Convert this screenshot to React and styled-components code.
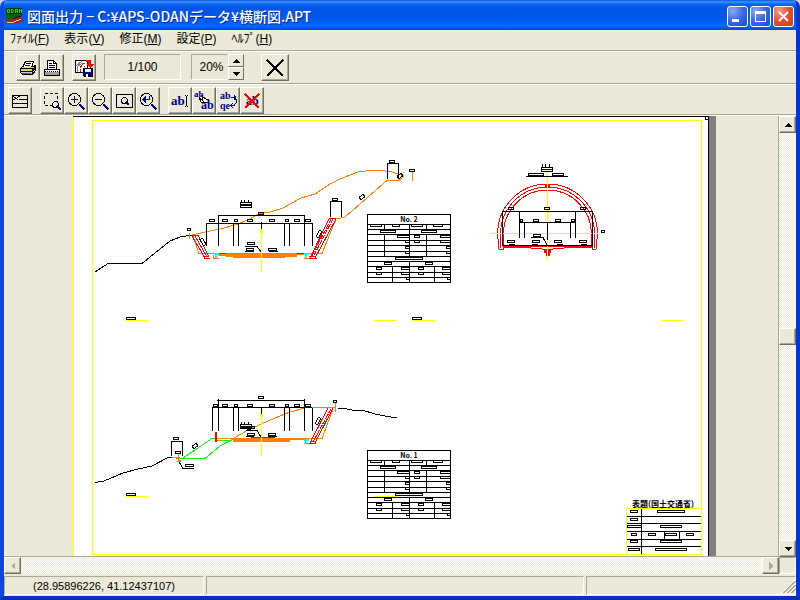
import React, {useState} from 'react';
import styled, {createGlobalStyle} from 'styled-components';

const GlobalStyle = createGlobalStyle`
  * {
    box-sizing: border-box;
  }
  body {
    margin: 0;
    background: #c8d4f0;
  }
  button, input {
    font-family: inherit;
    font-size: inherit;
    color: inherit;
    padding: 0;
    margin: 0;
    border-radius: 0;
  }
`;

const Window = styled.div`
  display: flex;
  flex-direction: column;
  height: 100vh;
  min-height: 400px;
  background-color: #ece9d8;
  border: 4px solid #0a48e0;
  border-top: 0;
  border-right-color: #0836c8;
  border-bottom-color: #0530c0;
  border-radius: 7px 7px 0 0;
  font-family: "Liberation Sans", "Noto Sans CJK JP", sans-serif;
  font-size: 12px;
  color: #000;
  overflow: hidden;
`;

const TitleBar = styled.header`
  display: flex;
  align-items: center;
  flex: none;
  height: 30px;
  margin: 0 -4px;
  padding: 2px 6px 0;
  gap: 5px;
  background: linear-gradient(180deg, #0a4fd8 0%, #3d95ff 6%, #0a62f0 14%, #0055e5 30%, #0058ec 60%, #0566fb 88%, #0048cc 100%);
`;

const Title = styled.h1`
  flex: 1;
  margin: 0;
  font-family: "Noto Sans CJK JP", sans-serif;
  font-size: 14px;
  line-height: 20px;
  font-weight: 500;
  white-space: nowrap;
  color: #fff;
  text-shadow: 1px 1px 0 #0a2a88;
`;

const WindowButtons = styled.div`
  display: flex;
  gap: 2px;
`;

const WindowButton = styled.button`
  width: 21px;
  height: 21px;
  border: 1px solid #fff;
  border-radius: 3px;
  background: ${props => props.$close
    ? 'radial-gradient(circle at 25% 20%, #f0a088, #e0502c 50%, #c83c14)'
    : 'radial-gradient(circle at 25% 20%, #88a8f4, #3a68e4 50%, #1c48cc)'};
  svg {
    display: block;
  }
`;

const MenuBar = styled.nav`
  display: flex;
  flex: none;
  height: 22px;
  padding: 0 6px;
  gap: 15px;
  border-bottom: 1px solid #fff;
  box-shadow: inset 0 -1px 0 #aca899;
`;

const MenuItem = styled.button`
  border: 0;
  background: none;
  line-height: 18px;
  height: 18px;
  white-space: nowrap;
`;

const Toolbar = styled.div`
  display: flex;
  flex: none;
  height: ${props => props.$tall ? 33 : 31}px;
  padding: 2px ${props => props.$tall ? 12 : 4}px;
  gap: 8px;
  border-bottom: 1px solid #fff;
  box-shadow: inset 0 -1px 0 #aca899;
`;

const ToolGroup = styled.div`
  display: flex;
`;

const ToolButton = styled.button`
  display: flex;
  align-items: center;
  justify-content: center;
  width: ${props => props.$wide ? 28 : 24}px;
  height: 27px;
  background-color: #ece9d8;
  border: 1px solid;
  border-color: #fff #716f64 #716f64 #fff;
  box-shadow: inset -1px -1px 0 #aca899;
`;

const Scale = styled.output`
  width: 77px;
  height: 26px;
  line-height: 24px;
  text-align: center;
  border: 1px solid;
  border-color: #aca899 #fff #fff #aca899;
`;

const ZoomBox = styled.div`
  display: flex;
  height: 27px;
  margin: 0 9px 0 2px;
`;

const ZoomInput = styled.input`
  width: 37px;
  height: 26px;
  padding-left: 4px;
  text-align: center;
  background: none;
  border: 1px solid;
  border-color: #aca899 transparent #fff #aca899;
  outline: 0;
`;

const Spinner = styled.div`
  display: flex;
  flex-direction: column;
`;

const SpinButton = styled.button`
  display: flex;
  align-items: center;
  justify-content: center;
  width: 16px;
  height: 13px;
  background-color: #ece9d8;
  border: 1px solid;
  border-color: #fff #716f64 #716f64 #fff;
`;

const Workspace = styled.main`
  display: grid;
  grid-template-columns: 1fr 17px;
  grid-template-rows: 1fr 17px;
  flex: 1;
  min-height: 0;
`;

const Viewer = styled.div`
  display: flex;
  justify-content: center;
  min-width: 0;
  min-height: 0;
  padding-left: 7px;
  overflow: hidden;
  border: 1px solid #aca899;
  border-width: 0 1px 1px 0;
`;

const Sheet = styled.svg`
  flex: none;
  width: 643px;
  height: 441px;
  shape-rendering: crispEdges;
`;

const track = `
  background: repeating-conic-gradient(#fff 0% 25%, #ece9d8 0% 50%) 0 0 / 2px 2px;
`;

const VerticalBar = styled.div`
  ${track}
  display: flex;
  flex-direction: column;
  justify-content: space-between;
`;

const HorizontalBar = styled.div`
  ${track}
  display: flex;
  justify-content: space-between;
`;

const ScrollButton = styled.button`
  display: flex;
  align-items: center;
  justify-content: center;
  width: 17px;
  height: 17px;
  background-color: #ece9d8;
  border: 1px solid;
  border-color: #fff #716f64 #716f64 #fff;
  box-shadow: inset -1px -1px 0 #aca899;
`;

const Corner = styled.div`
  border: 1px solid;
  border-color: #aca899 #fff #fff #aca899;
`;

const StatusBar = styled.footer`
  display: grid;
  grid-template-columns: 200px 1fr 210px;
  gap: 2px;
  flex: none;
  height: 22px;
  padding-top: 2px;
`;

const StatusCell = styled.div`
  display: flex;
  align-items: center;
  justify-content: ${props => props.$grip ? 'flex-end' : 'center'};
  height: 19px;
  font-size: 11px;
  white-space: nowrap;
  border: 1px solid;
  border-color: #aca899 #fff #fff #aca899;
`;

const Icon = styled.svg`
  display: block;
  flex: none;
  overflow: visible;
  shape-rendering: crispEdges;
`;

const IconText = styled.text`
  font-family: "Liberation Serif", serif;
  font-weight: bold;
  font-size: ${props => props.$size || 12}px;
  fill: #000080;
`;

const DrawingText = styled.text`
  font-family: "Noto Sans CJK JP", sans-serif;
  font-weight: bold;
  font-size: ${props => props.$size}px;
`;

const arrows = {
    up: 'M4 0L8 4H0Z',
    down: 'M0 0H8L4 4Z',
    left: 'M4 0V8L0 4Z',
    right: 'M0 0L4 4L0 8Z'
};

const Arrow = ({dir, color = '#000'}) => (
    <Icon width={dir === 'left' || dir === 'right' ? 4 : 8} height={dir === 'left' || dir === 'right' ? 8 : 4}>
        <path d={arrows[dir]} fill={color}/>
    </Icon>
);

const AppIcon = () => (
    <Icon width="16" height="16">
        <path d="M0 0H16V6H0Z" fill="#003800"/>
        <path d="M1.5 1V5M3.5 1V5M1 1.5H4M1 4.5H4M5.5 1V5M7.5 2V4M5 1.5H7M5 4.5H7M9.5 1V5M11.5 1V5M9 1.5H12M9 3.5H12M13.5 1V5M15.5 1V5M14 2.5H15" stroke="#18c828"/>
        <path d="M0 6H16V7L10 9L4 12H0Z" fill="#086010"/>
        <path d="M4 12L10 9L16 7V10L8 12Z" fill="#101010"/>
        <path d="M0 12L8 11L16 8V14L8 16H0Z" fill="#a02818"/>
        <path d="M1 14H8L15 11" stroke="#e0c8b0" fill="none"/>
    </Icon>
);

const PrinterIcon = () => (
    <Icon width="20" height="20">
        <path d="M7.5 3.5H15.5L13.5 9.5H4.5Z" fill="#fff" stroke="#000"/>
        <path d="M8 5.5H13M7 7.5H12" stroke="#000"/>
        <path d="M2.5 10.5L4.5 8.5H15.5L17.5 7.5V12.5L14.5 16.5H4.5L2.5 14.5Z" fill="#c8c8c8" stroke="#000"/>
        <path d="M6 8.5H13" stroke="#fff"/>
        <path d="M2 10.5H14.5V16M2 13.5H14L17 9M14 14L18 10" stroke="#000" fill="none"/>
        <path d="M4 15.5H13" stroke="#606060"/>
        <path d="M10 12.5H13" stroke="#e0e000"/>
    </Icon>
);

const PlotterIcon = () => (
    <Icon width="20" height="20">
        <path d="M5.5 11V2.5H11.5L14.5 5.5V11" fill="#fff" stroke="#000"/>
        <path d="M11.5 2V5.5H15M7 5.5H10M7 7.5H13M7 9.5H13" stroke="#000" fill="none"/>
        <path d="M2.5 11.5H17.5V17.5H2.5Z" fill="#fff" stroke="#000"/>
        <path d="M3 14H17V17H3Z" fill="#a0a0a0"/>
        <path d="M3 13.5H17" stroke="#000" strokeDasharray="1 1"/>
    </Icon>
);

const ExportIcon = () => (
    <Icon width="20" height="20">
        <path d="M1.5 2.5H13.5V14.5H1.5Z" fill="#fff" stroke="#000"/>
        <path d="M2 8L8 3M3 14V9L8 5H11" stroke="#808080" fill="none"/>
        <path d="M6 14V10L9 6L12 4M9 13V10L11 8" stroke="#f00" strokeDasharray="3 1" fill="none"/>
        <path d="M12 2H17V6H20L16 10L12 6H14V4H12Z" fill="#f00"/>
        <path d="M9.5 10.5H18.5V18.5H10.5L9.5 17.5Z" fill="#0000a0" stroke="#000"/>
        <path d="M11 11H17V14H11ZM12 16H16V19H12Z" fill="#fff"/>
        <path d="M14 16H16V19H14Z" fill="#000"/>
    </Icon>
);

const CloseIcon = () => (
    <Icon width="18" height="18">
        <path d="M1 1L17 17M17 1L1 17" stroke="#000" strokeWidth="2.6"/>
    </Icon>
);

const ListIcon = () => (
    <Icon width="20" height="20">
        <path d="M2.5 4.5H17.5V16.5H2.5ZM3 12.5H17M3 8.5H5M9 8.5H17M3 5L8 9M5 8L10 5" fill="none" stroke="#000"/>
    </Icon>
);

const Lens = ({x, y, r}) => (
    <>
        <circle cx={x} cy={y} r={r} fill="none" stroke="#000"/>
        <path d={`M${x + r - 1} ${y + r - 1}L${x + r + 4} ${y + r + 4}`} stroke="#000080" strokeWidth="2"/>
    </>
);

const AreaIcon = () => (
    <Icon width="20" height="20">
        <path d="M2.5 2.5H15.5V14.5H2.5Z" fill="none" stroke="#000" strokeDasharray="3 2"/>
        <circle cx="13.5" cy="13.5" r="3" fill="#ece9d8" stroke="#000"/>
        <path d="M15 15L19 19" stroke="#000080" strokeWidth="2"/>
    </Icon>
);

const ZoomInIcon = () => (
    <Icon width="20" height="20">
        <Lens x={8.5} y={8.5} r={6}/>
        <path d="M5 8.5H12M8.5 5V12" stroke="#000080"/>
    </Icon>
);

const ZoomOutIcon = () => (
    <Icon width="20" height="20">
        <Lens x={8.5} y={8.5} r={6}/>
        <path d="M5 8.5H12" stroke="#000080"/>
    </Icon>
);

const FitIcon = () => (
    <Icon width="20" height="20">
        <path d="M2.5 3.5H18.5V16.5H2.5Z" fill="none" stroke="#000"/>
        <circle cx="10.5" cy="9.5" r="3" fill="none" stroke="#000"/>
        <path d="M12 11L15 14" stroke="#000080" strokeWidth="2"/>
    </Icon>
);

const BackIcon = () => (
    <Icon width="20" height="20">
        <Lens x={8.5} y={8.5} r={6}/>
        <path d="M11.5 5V8.5H7" stroke="#0000a0" fill="none"/>
        <path d="M8 5V12L4 8.5Z" fill="#0000a0"/>
    </Icon>
);

const TextIcon = () => (
    <Icon width="20" height="20">
        <IconText x="1" y="14" $size={13}>ab</IconText>
        <path d="M15 4.5H16M17 4.5H18M16.5 5V15M15 15.5H16M17 15.5H18" stroke="#000"/>
    </Icon>
);

const MoveTextIcon = () => (
    <Icon width="20" height="20">
        <IconText x="0" y="6" $size={9}>ab</IconText>
        <path d="M5 6L9 10L8 5L12 8H14V11L11 12L7 11Z" fill="#fff" stroke="#000"/>
        <IconText x="7" y="18" $size={12}>ab</IconText>
    </Icon>
);

const ReplaceTextIcon = () => (
    <Icon width="20" height="20">
        <IconText x="2" y="8" $size={10}>ab</IconText>
        <IconText x="2" y="18" $size={10}>qe</IconText>
        <path d="M13 6.5H16L18.5 9V11L16 14.5H13M16 4L18 7L16 9M15 12L13 14.5L15 17" stroke="#0000c0" fill="none"/>
    </Icon>
);

const DeleteTextIcon = () => (
    <Icon width="20" height="20">
        <IconText x="4" y="14" $size={12}>ab</IconText>
        <path d="M3 3L17 17M17 3L3 17" stroke="#f00" strokeWidth="2"/>
    </Icon>
);

const Grip = () => (
    <Icon width="14" height="14">
        <path d="M2 14L14 2M6 14L14 6M10 14L14 10" stroke="#aca899" strokeWidth="2"/>
        <path d="M1 14L14 1M5 14L14 5M9 14L14 9" stroke="#fff"/>
    </Icon>
);

const menus = [
    {name: 'ﾌｧｲﾙ', key: 'F'},
    {name: '表示', key: 'V'},
    {name: '修正', key: 'M'},
    {name: '設定', key: 'P'},
    {name: 'ﾍﾙﾌﾟ', key: 'H'}
];

const viewTools = [
    [{label: '一覧', icon: ListIcon}],
    [
        {label: '範囲', icon: AreaIcon},
        {label: '拡大', icon: ZoomInIcon},
        {label: '縮小', icon: ZoomOutIcon},
        {label: '全体', icon: FitIcon},
        {label: '戻る', icon: BackIcon}
    ],
    [
        {label: '文字入力', icon: TextIcon},
        {label: '文字移動', icon: MoveTextIcon},
        {label: '文字変更', icon: ReplaceTextIcon},
        {label: '文字削除', icon: DeleteTextIcon}
    ]
];

// label boxes are [x, y, width], all of them 2px high
const Labels = ({items}) => items.map(([x, y, w], i) => (
    <rect key={i} x={x + 0.5} y={y + 0.5} width={w} height="2" fill="none" stroke="#000"/>
));

const Tilted = ({x, y, w = 5, angle = -35}) => (
    <rect x={x - w / 2} y={y - 1.5} width={w} height="3" fill="none" stroke="#000" transform={`rotate(${angle} ${x} ${y})`}/>
);

const Line = ({d, color = '#000', width = 1}) => (
    <path d={d} fill="none" stroke={color} strokeWidth={width}/>
);

const ORANGE = '#ff8000';
const RED = '#ff0000';
const YELLOW = '#ffff00';
const GREEN = '#00ff00';

const UpperSection = () => (
    <g>
        <Line d="M95 272L108 263.5H142L160 249L170 241L180 237L192 235"/>
        <Line color={ORANGE} d="M192 235L205 232L220 229L235 225L250 219L258 214L270 212L283 208L292 203L301 198L315 194L330 184L338 180L350 175L358 172L370 170.5H382L392 172L404 176L399 180.5H387L345 217L341 218H332"/>
        <Line color={ORANGE} d="M189.5 233V239M412.5 172V181M193 236L199 253.5H216M336 219L322 253.5H306"/>
        <Line d="M387.5 179V163.5H398.5V178M330.5 217V201.5H341.5V217"/>
        <Line color={RED} d="M192 235.5H198M192 236L205 258M195 236L207 257M198 235L209 257M204 258.5H210M203 256.5H209"/>
        <Line color={RED} d="M329 218.5H336M329 219L310 258M336 219L315 258M309 258.5H317M309 256.5H316"/>
        <path d="M333 219L313 257M331 219L312 256" stroke={RED} strokeDasharray="5 1"/>
        <path d="M218 253H305V255H297V257H285V258H233V257H218Z" fill={ORANGE}/>
        <path d="M218 256H226V257H218ZM297 256H304V257H297Z" fill="#fff"/>
        <Line color={RED} d="M219 253.5H226M297 253.5H304"/>
        <Line color="#00ffff" width={2} d="M216 254V258M214 254H219M306 254V258M304 254H309"/>
        <Line color={ORANGE} d="M213 258.5H219M304 258.5H309M213.5 255V258"/>
        <Line d="M218.5 246V215.5H304.5V246M206.5 246V223.5H312.5V246M233.5 223V246M238.5 223V246M284.5 223V246M289.5 223V246"/>
        <Line d="M240 204.5H251M241.5 200V202M244.5 200V202M248.5 200V202M261.5 222V229"/>
        <Line color={YELLOW} d="M261.5 229V272"/>
        <rect x="260" y="230" width="3" height="3" fill={YELLOW}/>
        <Line d="M245 246.5H257L261 252M245 251.5H254M269 251.5H278"/>
        <Labels items={[
            [187, 228, 3], [258, 212, 5], [209, 219, 5], [222, 219, 5], [234, 219, 3], [247, 219, 5],
            [269, 219, 5], [285, 219, 3], [294, 219, 5], [305, 219, 5], [240, 202, 11], [240, 205, 11],
            [247, 242, 7], [246, 248, 7], [268, 248, 8], [389, 160, 5], [409, 169, 5], [332, 198, 5]
        ]}/>
        <Tilted x={362} y={197}/>
        <Tilted x={400} y={176}/>
        <Tilted x={319} y={234} w={7} angle={-62}/>
        <Tilted x={203} y={242} w={7} angle={58}/>
    </g>
);

const LowerSection = () => (
    <g>
        <Line d="M95 482.5L104 481L123 473L138 469L152 466L168 457.5H173"/>
        <Line d="M171.5 456V441.5H182.5V456M178 460L183 468.5H194M217 400.5H304.5"/>
        <Line color={ORANGE} d="M172 457.5H180M178.5 453V462M176 458L181 461L177 462"/>
        <Line color={GREEN} d="M179 458.5H205L220 446L233 439M183 458L212 438.5H233M218 440H232M228 442L233 439"/>
        <path d="M233 438H306V440H290V442H233Z" fill={ORANGE}/>
        <Line color={ORANGE} d="M216 438.5H233M216 440.5H221M234 438L248 430L261 424L275 418L290 412L305 408L316 407.5H335M335.5 402V412M333 409L322 438.5H306"/>
        <Line color={RED} width={2} d="M216 432V442"/>
        <Line color={RED} d="M251 437.5H275M328 407.5H334M328 408L310 443M333 408L315 443M309 443.5H316M310 441.5H315"/>
        <path d="M331 409L313 442" stroke={RED} strokeDasharray="5 1"/>
        <Line color="#00ffff" width={2} d="M306 439V443M304 440H309"/>
        <Line color={ORANGE} d="M304 443.5H309"/>
        <Line d="M212.5 431V407.5H312.5V431M218.5 399V431M304.5 399V431M233.5 407V431M238.5 407V431M284.5 407V431M289.5 407V431"/>
        <Line d="M241.5 422V424M244.5 422V424M248.5 422V424M261.5 407V414M246 430.5H257L261 437M246 436.5H254M268 436.5H277"/>
        <Line color={ORANGE} d="M312 407.5H335"/>
        <Line color={YELLOW} d="M261.5 414V456"/>
        <rect x="260" y="414" width="3" height="3" fill={YELLOW}/>
        <Line width={2} d="M240 428H252M247 430H251"/>
        <Labels items={[
            [258, 396, 5], [213, 404, 4], [222, 404, 5], [234, 404, 3], [247, 404, 5], [269, 404, 5],
            [285, 404, 3], [294, 404, 5], [305, 404, 5], [240, 424, 11], [250, 426, 4], [247, 433, 7],
            [268, 433, 7], [173, 437, 5], [175, 451, 5], [185, 464, 8], [333, 400, 3]
        ]}/>
        <Tilted x={195} y={446}/>
        <Tilted x={318} y={421} w={7} angle={-62}/>
        <Line d="M338 408.5H345L352 410H362L375 414L385 416L397 418"/>
    </g>
);

const TunnelSection = () => (
    <g>
        <Line color={RED} d="M497.5 234A50 50 0 0 1 597.5 234L596 249H592V246H503V249H499Z"/>
        <Line color={RED} d="M500.5 248V234A47 47 0 0 1 594.5 234V248"/>
        <Line color={RED} d="M503.5 246V234A44 44 0 0 1 591.5 234V246M503 247.5H525L547 249.5L570 247.5H592"/>
        <path d="M545 184H550V188H545ZM544 250H551V253H544ZM546 253H550V256H546Z" fill={RED}/>
        <Line color={YELLOW} d="M547.5 172V261M490 233.5H600"/>
        <Line d="M502.5 246V211.5H592.5V246M519.5 211V238M575.5 211V238M519 222.5H575M524.5 222V238M570.5 222V238M547.5 222V240M502 245.5H592"/>
        <Line d="M541 169.5H552M542.5 164V167M545.5 164V167M549.5 164V167M526 176.5H568M531 237.5H543L547 245M509 244.5H515M532 244.5H538M557 244.5H563M581 244.5H587"/>
        <Labels items={[
            [541, 167, 11], [541, 169, 11], [528, 173, 15], [552, 173, 11], [508, 207, 5], [544, 207, 5], [580, 207, 5],
            [520, 219, 2], [533, 219, 5], [555, 219, 5], [571, 219, 3], [533, 234, 7],
            [507, 240, 7], [532, 240, 7], [554, 240, 7], [579, 240, 7], [601, 230, 3]
        ]}/>
    </g>
);

const rowLines = [10, 15, 20, 26, 31, 37, 42, 47, 52, 58, 63];

const EarthworkTable = ({x, y, name}) => (
    <g transform={`translate(${x} ${y})`}>
        <rect x="0.5" y="0.5" width="83" height="68" fill="#fff" stroke="#000"/>
        {rowLines.map(row => <Line key={row} d={`M0 ${row}.5H84`}/>)}
        <Line d="M42.5 10V42M17.5 10V15M17.5 20V42M59.5 20V42M42.5 47V68M25.5 52V68M67.5 52V68M59.5 10V15"/>
        <DrawingText x="42" y="8" textAnchor="middle" $size={7}>{name}</DrawingText>
        <Labels items={[
            [3, 10, 11], [25, 10, 7], [44, 10, 11], [66, 10, 9], [13, 16, 15], [54, 16, 15],
            [30, 21, 12], [47, 21, 5], [73, 21, 10], [38, 26, 4], [47, 26, 5], [73, 26, 10],
            [38, 32, 4], [79, 32, 4], [38, 37, 4], [79, 37, 4], [28, 43, 27], [17, 48, 7], [58, 48, 7],
            [9, 53, 5], [34, 53, 8], [51, 53, 5], [75, 53, 8], [9, 58, 5], [34, 58, 8], [51, 58, 5], [75, 58, 8],
            [39, 63, 3], [80, 63, 3]
        ]}/>
    </g>
);

const TitleBlock = () => (
    <g>
        <DrawingText x="632" y="507" $size={8}>表題(国土交通省)</DrawingText>
        <Line d="M641.5 509V554M627 516.5H701M627 523.5H701M627 531.5H701M627 539.5H701M627 546.5H701M664.5 531V539M679.5 531V539"/>
        <Labels items={[
            [630, 510, 7], [657, 510, 27], [630, 518, 7], [627, 525, 14], [660, 525, 21], [631, 533, 5],
            [648, 533, 7], [665, 533, 11], [686, 533, 7], [630, 540, 7], [660, 540, 21], [628, 548, 11], [655, 548, 31]
        ]}/>
        <rect x="626.5" y="508.5" width="75" height="46" fill="none" stroke={YELLOW}/>
    </g>
);

const Drawing = () => (
    <Sheet viewBox="73 116 643 441" role="img" aria-label="横断図">
        <rect x="73" y="116" width="636" height="441" fill="#fff"/>
        <rect x="709" y="116" width="7" height="441" fill="#808080"/>
        <Line color={YELLOW} d="M73.5 116V557"/>
        <Line d="M73 116.5H708.5V557"/>
        <rect x="92.5" y="120.5" width="609" height="434" fill="none" stroke={YELLOW}/>
        <circle cx="707" cy="118" r="2" fill="#fff" stroke="#000"/>
        <UpperSection/>
        <LowerSection/>
        <TunnelSection/>
        <EarthworkTable x={367} y={214} name="No. 2"/>
        <EarthworkTable x={367} y={450} name="No. 1"/>
        <Line color={YELLOW} d="M126 320.5H149M374 320.5H397M412 320.5H435M661 320.5H684M126 496.5H149M374 496.5H397"/>
        <Labels items={[[126, 317, 9], [412, 317, 9], [126, 493, 9]]}/>
        <TitleBlock/>
    </Sheet>
);

export default function App() {
    const [zoom, setZoom] = useState(20);

    return (
        <>
            <GlobalStyle/>
            <Window>
                <TitleBar>
                    <AppIcon/>
                    <Title>図面出力 − C:¥APS-ODANデータ¥横断図.APT</Title>
                    <WindowButtons>
                        <WindowButton aria-label="最小化">
                            <Icon width="19" height="19"><path d="M4 12H11V15H4Z" fill="#fff"/></Icon>
                        </WindowButton>
                        <WindowButton aria-label="最大化">
                            <Icon width="19" height="19">
                                <path d="M4 4H15V15H4ZM5 7V14H14V7Z" fill="#fff" fillRule="evenodd"/>
                            </Icon>
                        </WindowButton>
                        <WindowButton aria-label="閉じる" $close>
                            <svg width="19" height="19"><path d="M5 5L14 14M14 5L5 14" stroke="#fff" strokeWidth="2"/></svg>
                        </WindowButton>
                    </WindowButtons>
                </TitleBar>

                <MenuBar>
                    {
                        menus.map(menu => (
                            <MenuItem key={menu.key}>{menu.name}(<u>{menu.key}</u>)</MenuItem>
                        ))
                    }
                </MenuBar>

                <Toolbar $tall>
                    <ToolGroup>
                        <ToolButton aria-label="印刷"><PrinterIcon/></ToolButton>
                        <ToolButton aria-label="プロッタ"><PlotterIcon/></ToolButton>
                    </ToolGroup>
                    <ToolButton aria-label="保存"><ExportIcon/></ToolButton>
                    <Scale>1/100</Scale>
                    <ZoomBox>
                        <ZoomInput aria-label="倍率" value={`${zoom}%`} onChange={e => setZoom(parseInt(e.target.value) || 0)}/>
                        <Spinner>
                            <SpinButton aria-label="倍率を上げる" onClick={() => setZoom(zoom + 1)}><Arrow dir="up"/></SpinButton>
                            <SpinButton aria-label="倍率を下げる" onClick={() => setZoom(zoom - 1)}><Arrow dir="down"/></SpinButton>
                        </Spinner>
                    </ZoomBox>
                    <ToolButton aria-label="終了" $wide><CloseIcon/></ToolButton>
                </Toolbar>

                <Toolbar>
                    {
                        viewTools.map((group, i) => (
                            <ToolGroup key={i}>
                                {group.map(({label, icon: ToolIcon}) => (
                                    <ToolButton key={label} aria-label={label}><ToolIcon/></ToolButton>
                                ))}
                            </ToolGroup>
                        ))
                    }
                </Toolbar>

                <Workspace>
                    <Viewer>
                        <Drawing/>
                    </Viewer>
                    <VerticalBar>
                        <ScrollButton aria-label="上へ"><Arrow dir="up"/></ScrollButton>
                        <ScrollButton as="div"/>
                        <ScrollButton aria-label="下へ"><Arrow dir="down"/></ScrollButton>
                    </VerticalBar>
                    <HorizontalBar>
                        <ScrollButton aria-label="左へ"><Arrow dir="left" color="#aca899"/></ScrollButton>
                        <ScrollButton aria-label="右へ"><Arrow dir="right" color="#aca899"/></ScrollButton>
                    </HorizontalBar>
                    <Corner/>
                </Workspace>

                <StatusBar>
                    <StatusCell>(28.95896226, 41.12437107)</StatusCell>
                    <StatusCell/>
                    <StatusCell $grip><Grip/></StatusCell>
                </StatusBar>
            </Window>
        </>
    );
}
